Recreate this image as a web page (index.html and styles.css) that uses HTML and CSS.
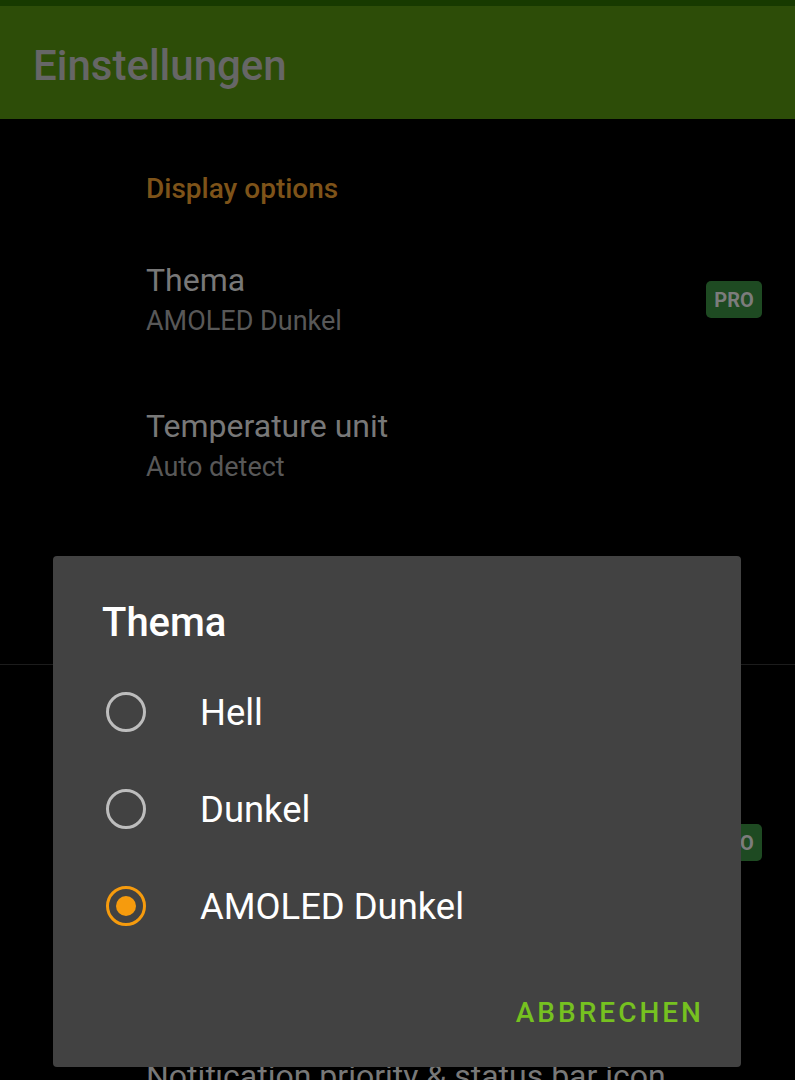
FILE: index.html
```html
<!DOCTYPE html>
<html lang="de">
<head>
  <meta charset="UTF-8">
  <title>Einstellungen</title>
  <meta name="viewport" content="width=device-width, initial-scale=1.0"/>
  <link rel="stylesheet" href="styles.css">
</head>
<body>

  <div class="statusbar"></div>
  <header class="appbar">
    <h1>Einstellungen</h1>
  </header>

  <main class="list">
    <div class="category">Display options</div>

    <div class="pref">
      <div class="pref-text">
        <div class="pref-title">Thema</div>
        <div class="pref-summary">AMOLED Dunkel</div>
      </div>
      <span class="badge">PRO</span>
    </div>

    <div class="pref">
      <div class="pref-text">
        <div class="pref-title">Temperature unit</div>
        <div class="pref-summary">Auto detect</div>
      </div>
    </div>

    <!-- row hidden behind the dialog -->
    <div class="pref-spacer tall"></div>

    <div class="divider"></div>

    <div class="category next"></div>

    <div class="pref">
      <div class="pref-text empty"></div>
      <span class="badge">PRO</span>
    </div>

    <div class="pref-spacer"></div>

    <div class="pref">
      <div class="pref-text">
        <div class="pref-title">Notification priority &amp; status bar icon</div>
      </div>
    </div>
  </main>

  <div class="dialog">
    <h2>Thema</h2>
    <label class="choice">
      <span class="radio"></span>
      <span class="choice-label">Hell</span>
    </label>
    <label class="choice">
      <span class="radio"></span>
      <span class="choice-label">Dunkel</span>
    </label>
    <label class="choice">
      <span class="radio checked"></span>
      <span class="choice-label">AMOLED Dunkel</span>
    </label>
    <div class="actions">
      <button type="button">Abbrechen</button>
    </div>
  </div>

</body>
</html>
```

FILE: styles.css
```css
body {
  margin: 0;
  width: 795px;
  height: 1080px;
  overflow: hidden;
  position: relative;
  background-color: #000;
  font-family: Roboto, "Liberation Sans", sans-serif;
}
.statusbar {
  height: 6px;
  background-color: #173a00;
}
.appbar {
  height: 113px;
  box-sizing: border-box;
  padding: 39px 33px 0;
  background-color: #2d4d08;
}
.appbar h1 {
  margin: 0;
  font-size: 42px;
  line-height: 1;
  font-weight: 500;
  color: #666;
}
.category {
  padding: 56px 0 22px 146px;
  font-size: 28px;
  line-height: 1;
  height: 28px;
  font-weight: 500;
  color: #7e5319;
}
.category.next {
  padding-top: 53px;
}
.pref {
  display: flex;
  align-items: center;
  padding: 39px 33px 36px 146px;
}
.pref-text {
  flex: 1;
}
.pref-text.empty {
  height: 71px;
}
.pref-title {
  font-size: 32px;
  line-height: 1;
  color: #787878;
  white-space: nowrap;
}
.pref-summary {
  margin-top: 12px;
  font-size: 27px;
  line-height: 1;
  color: #585858;
}
.pref-spacer {
  height: 107px;
}
.pref-spacer.tall {
  height: 147px;
}
.divider {
  height: 1px;
  background-color: #1c1c1c;
}
.badge {
  width: 56px;
  height: 37px;
  display: flex;
  align-items: center;
  justify-content: center;
  border-radius: 5px;
  background-color: #1e4a22;
  color: #7c7c7c;
  font-size: 20px;
  font-weight: bold;
}

.dialog {
  position: absolute;
  left: 53px;
  top: 556px;
  width: 688px;
  height: 511px;
  box-sizing: border-box;
  padding: 47px 0 0;
  background-color: #424242;
  border-radius: 4px;
}
.dialog h2 {
  margin: 0 0 20px 49px;
  font-size: 40px;
  line-height: 1;
  font-weight: 500;
  color: #fff;
}
.choice {
  display: flex;
  align-items: center;
  gap: 54px;
  height: 97px;
  padding-left: 53px;
  font-size: 36.4px;
  line-height: 1;
  color: #fff;
}
.choice-label {
  padding-top: 3px;
}
.radio {
  width: 40px;
  height: 40px;
  box-sizing: border-box;
  border: 3px solid #bdbdbd;
  border-radius: 50%;
  display: flex;
  align-items: center;
  justify-content: center;
}
.radio.checked {
  border: 3.5px solid #f69b0d;
}
.radio.checked::after {
  content: "";
  width: 20px;
  height: 20px;
  border-radius: 50%;
  background-color: #f69b0d;
}
.actions {
  display: flex;
  justify-content: flex-end;
  margin-top: 45px;
  padding-right: 37px;
}
.actions button {
  padding: 0;
  border: none;
  background: none;
  font-family: Roboto, "Liberation Sans", sans-serif;
  font-size: 28px;
  line-height: 1;
  font-weight: 500;
  letter-spacing: 3px;
  text-transform: uppercase;
  color: #76c120;
}
```
